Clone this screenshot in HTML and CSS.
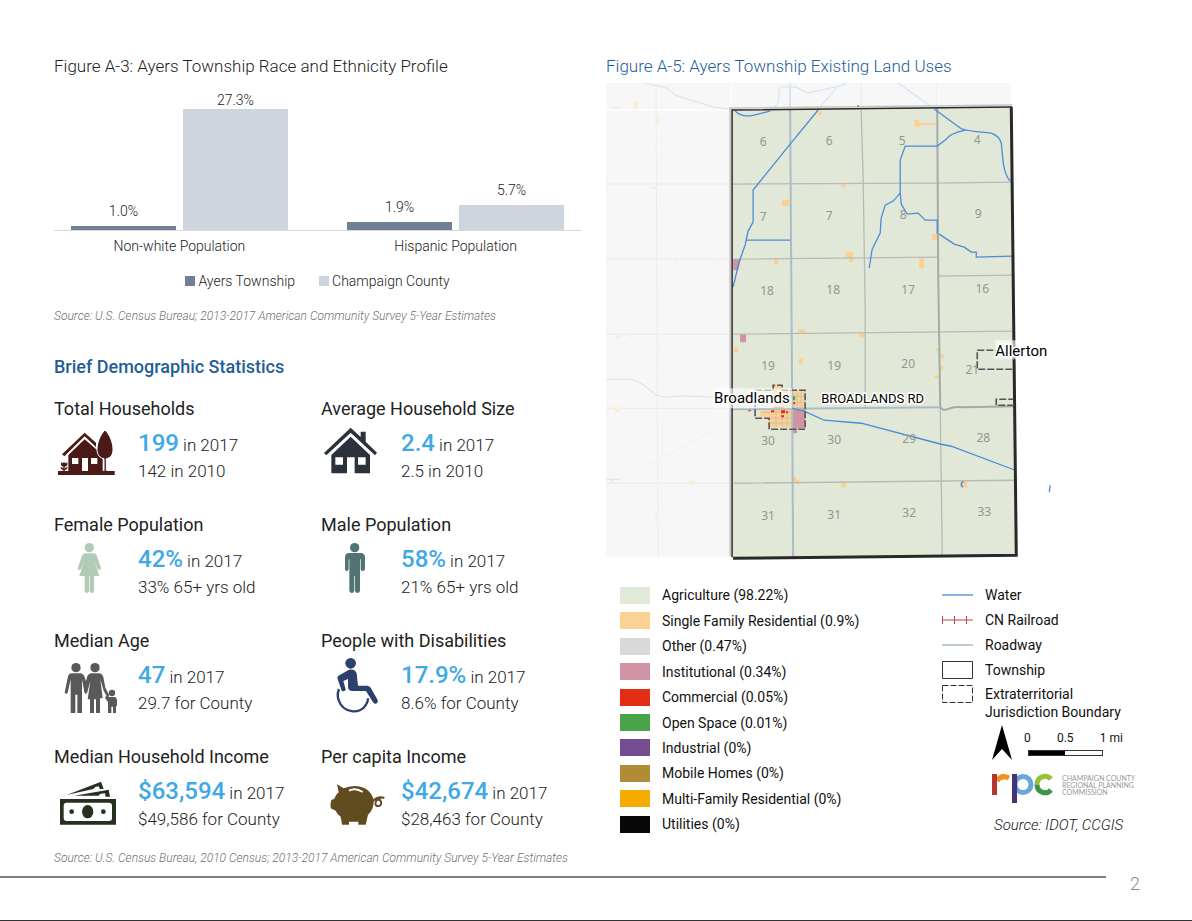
FILE: index.html
```html
<!DOCTYPE html>
<html lang="en">
<head>
<meta charset="utf-8">
<title>Ayers Township Profile</title>
<link rel="stylesheet" href="styles.css">
</head>
<body>
<main class="page">
  <div class="column">
    <section>
      <h2 class="figure-title">Figure A-3: Ayers Township Race and Ethnicity Profile</h2>
      <div class="plot">
        <div class="group">
          <div class="bar-column"><span class="bar-label">1.0%</span><div class="bar township" style="height:2.9%"></div></div>
          <div class="bar-column"><span class="bar-label tight">27.3%</span><div class="bar county" style="height:79.6%"></div></div>
        </div>
        <div class="group">
          <div class="bar-column"><span class="bar-label">1.9%</span><div class="bar township" style="height:5.5%"></div></div>
          <div class="bar-column"><span class="bar-label">5.7%</span><div class="bar county" style="height:16.6%"></div></div>
        </div>
      </div>
      <div class="categories"><span>Non-white Population</span><span>Hispanic Population</span></div>
      <div class="chart-legend">
        <span class="key"><i class="dot township"></i>Ayers Township</span>
        <span class="key"><i class="dot county"></i>Champaign County</span>
      </div>
      <p class="source">Source: U.S. Census Bureau; 2013-2017 American Community Survey 5-Year Estimates</p>
    </section>

    <section>
      <h2 class="section-title">Brief Demographic Statistics</h2>
      <div class="stats">
        <article class="stat">
          <h3>Total Households</h3>
          <div class="stat-body">
            <svg class="icon" viewBox="42 255 198 180" fill="#4a1a18" aria-hidden="true">
              <path d="M54 393H224V405H54Z"/>
              <path d="M66 343 134 278 168 308V321L134 289 73 349Z"/>
              <path d="M85 345 134 298 171 330Q176 350 188 356V394H85Z"/>
              <path d="M96 354H115V372H96ZM126 354H144V393H126ZM153 354H172V372H153Z" fill="#fff"/>
              <path d="M195 270C180 284 171 310 171 328C171 345 181 355 192 356V394H199V356C211 355 219 345 219 328C219 309 210 284 195 270Z" stroke="#fff" stroke-width="3"/>
              <path d="M190 392H202V405H190Z"/>
              <path d="M63 367 68 370 72 366 76 370 82 367V376Q79 380 74 380V386Q77 380 84 382Q81 390 74 391V394H70V391Q63 389 61 382Q68 381 70 386V380Q64 379 63 374Z"/>
            </svg>
            <p><strong>199</strong> in 2017<br>142 in 2010</p>
          </div>
        </article>
        <article class="stat">
          <h3>Average Household Size</h3>
          <div class="stat-body">
            <svg class="icon" viewBox="33 255 198 180" fill="#2b323c" aria-hidden="true">
              <path d="M42 339 122 263 152 291V275H167V305L201 338 195 346 122 278 49 346Z"/>
              <path d="M64 345 122 290 180 345V400H134V352H111V400H64Z"/>
              <path d="M76 352H99V374H76ZM144 352H167V374H144Z" fill="#fff"/>
            </svg>
            <p><strong>2.4</strong> in 2017<br>2.5 in 2010</p>
          </div>
        </article>
        <article class="stat">
          <h3>Female Population</h3>
          <div class="stat-body">
            <svg class="icon" viewBox="42 603 198 180" fill="#b2cbb8" aria-hidden="true">
              <circle cx="148" cy="623" r="14"/>
              <path d="M136 640H160Q168 640 171 648L183 684Q183 690 177 690Q174 689 172 685L163 660 178 708H162V753Q161 759 155 759Q149 758 149 753V708H147V753Q146 759 140 759Q134 758 134 753V708H118L133 660 124 685Q121 691 116 690Q112 687 114 682L126 647Q129 640 136 640Z"/>
            </svg>
            <p><strong>42%</strong> in 2017<br>33% 65+ yrs old</p>
          </div>
        </article>
        <article class="stat">
          <h3>Male Population</h3>
          <div class="stat-body">
            <svg class="icon" viewBox="33 603 198 180" fill="#527373" aria-hidden="true">
              <circle cx="134" cy="623" r="14"/>
              <path d="M116 639H153Q164 640 165 651V687Q164 693 158 693Q152 693 152 687V658H150V752Q149 759 142 759Q136 758 135 752V709H133V752Q132 759 125 759Q119 758 118 752V658H116V687Q115 693 110 693Q105 693 105 687V651Q106 640 116 639Z"/>
            </svg>
            <p><strong>58%</strong> in 2017<br>21% 65+ yrs old</p>
          </div>
        </article>
        <article class="stat">
          <h3>Median Age</h3>
          <div class="stat-body">
            <svg class="icon" viewBox="42 111 198 180" fill="#595959" aria-hidden="true">
              <circle cx="108" cy="143" r="14"/><circle cx="165" cy="143" r="14"/>
              <path d="M95 160H122Q130 161 133 169L138 184 142 169Q145 161 153 160H177Q187 161 190 171L196 203 208 226 203 234 191 212 181 178 188 235H180V279H168V238H162V279H150V238H143L151 183 141 220Q136 224 133 217L126 178V279H112V224H106V279H92V178L83 218Q79 224 74 218L84 169Q87 160 95 160Z"/>
              <circle cx="216" cy="219" r="9.5"/>
              <path d="M198 228 208 231H224Q231 233 231 240V258H228V279H219V260H214V279H204V247L195 233Z"/>
            </svg>
            <p><strong>47</strong> in 2017<br>29.7 for County</p>
          </div>
        </article>
        <article class="stat">
          <h3>People with Disabilities</h3>
          <div class="stat-body">
            <svg class="icon" viewBox="33 111 198 180" fill="#2b406b" aria-hidden="true">
              <circle cx="122" cy="130" r="16"/>
              <path d="M117 149Q136 146 140 160L144 197H172Q179 198 182 203L203 240Q205 248 198 251Q192 252 189 247L168 213H127Q115 213 114 201V177L100 183 107 208Q105 217 95 212L83 177Q80 171 88 166Z"/>
              <path d="M87 207Q80 225 86 240C98 279 151 285 168 254Q174 246 174 235" fill="none" stroke="#2b406b" stroke-width="7"/>
            </svg>
            <p><strong>17.9%</strong> in 2017<br>8.6% for County</p>
          </div>
        </article>
        <article class="stat">
          <h3>Median Household Income</h3>
          <div class="stat-body">
            <svg class="icon" viewBox="42 459 198 180" fill="#263020" aria-hidden="true">
              <path d="M80 525 183 485 191 506 180 508 176 499Q164 500 160 507Z"/>
              <path d="M103 527 206 509 210 530H197L195 520Q180 520 176 527Z"/>
              <path d="M60 537H228V614H60Z"/>
              <rect x="71" y="548" width="145" height="55" rx="9" fill="#fff"/>
              <ellipse cx="143" cy="575" rx="17" ry="20"/><circle cx="95" cy="575" r="7"/><circle cx="190" cy="575" r="7"/>
            </svg>
            <p><strong>$63,594</strong> in 2017<br>$49,586 for County</p>
          </div>
        </article>
        <article class="stat">
          <h3>Per capita Income</h3>
          <div class="stat-body">
            <svg class="icon" viewBox="33 459 198 180" fill="#614c20" aria-hidden="true">
              <path d="M81 493 101 505Q120 498 137 498Q181 501 191 540Q193 567 174 584L167 614H145V605H117V614H96L92 590Q82 584 77 572L62 565Q60 551 64 540L73 536Q76 525 86 517Z"/>
              <path d="M117 512Q137 502 158 516" fill="none" stroke="#fff" stroke-width="6"/>
              <path d="M187 544Q206 526 223 534M213 535C191 540 193 561 206 558C220 555 212 536 204 540" fill="none" stroke="#614c20" stroke-width="6"/>
            </svg>
            <p><strong>$42,674</strong> in 2017<br>$28,463 for County</p>
          </div>
        </article>
      </div>
      <p class="source">Source: U.S. Census Bureau, 2010 Census; 2013-2017 American Community Survey 5-Year Estimates</p>
    </section>
  </div>

  <section class="column">
    <h2 class="figure-title blue">Figure A-5: Ayers Township Existing Land Uses</h2>
    <svg class="map" viewBox="606 83 454 478" role="img" aria-label="Existing land use map of Ayers Township">
      <path d="M606 83H1011V108L733 557H606Z" fill="#f7f7f7"/>
      <g fill="none" stroke="#ebecee">
        <path d="M606 184H731M606 259H731M606 334H733M606 408H733M606 483H733M656 83 658 558M861 83V108M936 83V108"/>
        <path d="M790 83V108" stroke="#dfe4e9" stroke-width="2"/>
        <path d="M606 110H731M731 83V110" stroke="#fff"/>
        <path d="M619 480 733 420" stroke="#f1f2f2"/>
        <path d="M645 83 667 88 675 95 713 107 729 109M773 108 778 103 779 90Q779 86 784 87H796L807 93 840 86 846 83M838 86 819 108M898 83 930 106M606 379H629Q638 380 645 386L655 394Q661 398 675 396 692 395 725 398M606 479H619M611 479 614 483" stroke="#cfe3f5"/>
      </g>
      <path d="M613 107H619V109H613ZM633 102H638V109H633ZM657 118H660V123H657ZM655 147H657V151H655ZM651 186H656V189H651ZM727 165H729V168H727ZM727 278H729V282H727ZM675 260H677V262H675ZM715 260H717V262H715ZM616 335H621V338H616ZM629 335H632V337H629ZM659 346H661V351H659ZM614 407H621V412H614ZM689 480H695V483H689ZM655 515H658V521H655Z" fill="#fcefd9"/>
      <path d="M732 109 1012 107 1017 555 733 557Z" fill="#e1e8d8"/>
      <g class="residential">
        <path d="M818 111H822V115H818ZM914 120H919V123H936V125H919V127H914ZM782 200H789V206H782ZM841 184H845V187H841ZM774 259H778V264H774ZM846 252H853V258H853V262H849V258H846ZM919 258H924V268H919ZM932 234H937V240H932ZM798 329H805V333H798ZM734 347H738V352H734ZM799 358H803V364H799ZM859 333H865V337H859ZM936 348H939V351H936ZM940 354H944V358H940ZM940 366H943V370H940ZM934 375H939V378H934ZM792 476H796V479H799V483H792ZM841 482H846V487H841ZM960 481H967V487H960Z"/>
        <path d="M773 385H782V391H805V409H792V427H769V417H760V410H773Z"/>
      </g>
      <path d="M733 259H741L738 270H733ZM740 334H746V342H740ZM792 409H805V428H797V433H792Z" fill="#d094a4"/>
      <path d="M776 391V427M782 405V427M787 405V427M762 412H792M770 418H792M770 423H792M797 391V409M801 391V409M793 396H805M793 402H805" stroke="#c6bfae" stroke-width=".8"/>
      <path d="M792 396H795V400H792Z" fill="#4b9f35"/>
      <path d="M774 407H784V409H774ZM781 410H785V413H781ZM786 411H788V413H786ZM771 410H774V412H771ZM781 415H784V417H781ZM793 402H795V404H793ZM749 408 752 409 750 411H748Z" fill="#e32a17"/>
      <g fill="none" stroke="#b9bab8" stroke-width="1.3">
        <path d="M732 184 937 183 1012 182M732 259 937 257M938 276 1013 275M733 334 1014 331M734 483 1015 480M861 110 863 180 865 310V407M940 407 942 555"/>
        <path d="M937 108 938 276 940 406Q942 412 950 408 955 406 965 407L1014 406" stroke="#a3aaa7" stroke-width="2"/>
        <path d="M790 110 792 400 793 557M733 409 940 407" stroke="#a9bccb" stroke-width="2"/>
      </g>
      <g class="water">
        <path d="M735 111Q742 118 754 115L770 111M818 110 790 144 753 190V222L748 231 745 245 739 262 733 287M746 240H790"/>
        <path d="M934 109 960 128Q964 131 991 133 999 136 1001 143L1003 163Q1005 176 1010 181M965 130Q950 133 945 140L937 146H905L900 160V193L893 201 885 205 881 218 880 233 872 249 869 268M900 193 901 204 907 214 918 213 925 220H937V234"/>
        <path d="M939 234 954 244 964 247 971 252H976V257L1012 256M792 408 804 411 824 420 861 423 941 444 951 446 1015 470M1050 485 1049 492M963 481Q959 485 963 487"/>
      </g>
      <path d="M730 556V108L1012 105" fill="none" stroke="#c4c4c4" stroke-width="1.5"/>
      <path d="M732 557V110L1012 107" fill="none" stroke="#292929" stroke-width="1.5"/>
      <path d="M1011 107 1016 555 733 558" fill="none" stroke="#292929" stroke-width="3"/>
      <circle cx="858" cy="106" r="1" fill="#888"/>
      <path class="boundary" d="M755 390H773V385H782V390H805V429H769V418H755ZM1012 369H977V350H1012M1014 405H996V399H1013"/>
      <g class="section-number">
        <text x="763" y="146">6</text><text x="829" y="145">6</text><text x="902" y="145">5</text><text x="977" y="144">4</text>
        <text x="763" y="221">7</text><text x="829" y="220">7</text><text x="903" y="219">8</text><text x="978" y="218">9</text>
        <text x="767" y="295">18</text><text x="833" y="294">18</text><text x="908" y="294">17</text><text x="982" y="293">16</text>
        <text x="768" y="370">19</text><text x="834" y="370">19</text><text x="908" y="368">20</text><text x="972" y="374">21</text>
        <text x="768" y="445">30</text><text x="834" y="444">30</text><text x="909" y="443">29</text><text x="983" y="442">28</text>
        <text x="768" y="520">31</text><text x="834" y="519">31</text><text x="909" y="517">32</text><text x="984" y="516">33</text>
      </g>
      <path d="M713 388H792V408H713ZM995 340H1048V359H995Z" fill="#fff" opacity=".6"/>
      <g class="place">
        <text x="714" y="403">Broadlands</text>
        <text x="995" y="356">Allerton</text>
        <text class="road" x="821" y="403">BROADLANDS RD</text>
      </g>
    </svg>

    <div class="map-legend">
      <ul class="land-uses">
        <li><i class="swatch agriculture"></i>Agriculture (98.22%)</li>
        <li><i class="swatch single-family"></i>Single Family Residential (0.9%)</li>
        <li><i class="swatch other"></i>Other (0.47%)</li>
        <li><i class="swatch institutional"></i>Institutional (0.34%)</li>
        <li><i class="swatch commercial"></i>Commercial (0.05%)</li>
        <li><i class="swatch open-space"></i>Open Space (0.01%)</li>
        <li><i class="swatch industrial"></i>Industrial (0%)</li>
        <li><i class="swatch mobile"></i>Mobile Homes (0%)</li>
        <li><i class="swatch multi-family"></i>Multi-Family Residential (0%)</li>
        <li><i class="swatch utilities"></i>Utilities (0%)</li>
      </ul>
      <div class="map-notes">
        <ul class="symbols">
          <li><svg class="symbol" viewBox="0 0 31 18"><path d="M0 9H31" stroke="#4c8ad8" stroke-width="1.3"/></svg>Water</li>
          <li><svg class="symbol" viewBox="0 0 31 18"><path d="M0 9H31M.5 5V13M12.500 5V13M24.500 5V13" stroke="#c0453e"/></svg>CN Railroad</li>
          <li><svg class="symbol" viewBox="0 0 31 18"><path d="M0 9H31" stroke="#a6b8c8" stroke-width="1.500"/></svg>Roadway</li>
          <li><svg class="symbol" viewBox="0 0 31 18"><path d="M.5 .5H30.500V17.500H.5Z" fill="#fff" stroke="#333"/></svg>Township</li>
          <li class="two-line"><svg class="symbol" viewBox="0 0 31 18"><path d="M.5 .5H30.500V17.500H.5Z" fill="#fff" stroke="#333" stroke-dasharray="6 2"/></svg><span>Extraterritorial<br>Jurisdiction Boundary</span></li>
        </ul>
        <div class="scale-row">
          <svg class="north" viewBox="0 0 20 35" aria-label="North"><path d="M10 0 20 35 10 24 0 35Z"/></svg>
          <div class="scale">
            <div class="scale-labels"><span>0</span><span>0.5</span><span>1 mi</span></div>
            <div class="scale-bar"></div>
          </div>
        </div>
        <div class="brand">
          <svg class="logo" viewBox="0 0 62 30" fill="none" stroke-width="5" role="img" aria-label="rpc">
            <path d="M5 8Q9 1 17 5" stroke="#f0921e"/>
            <path d="M2.500 1V22" stroke="#b3372f"/>
            <circle cx="31" cy="11.500" r="8" stroke="#6aa7d8"/>
            <path d="M22.500 1V30" stroke="#43347a"/>
            <path d="M45 11.500A8 8 0 0 1 59 6" stroke="#97c23c"/>
            <path d="M45 11.500A8 8 0 0 0 59 17" stroke="#3f9448"/>
          </svg>
          <p>CHAMPAIGN COUNTY<br>REGIONAL PLANNING<br>COMMISSION</p>
        </div>
        <p class="map-source">Source: IDOT, CCGIS</p>
      </div>
    </div>
  </section>
</main>
<footer class="page-footer"><hr><span>2</span></footer>
</body>
</html>
```

FILE: styles.css
```css
* { box-sizing: border-box; }
body {
  margin: 0;
  min-height: 100vh;
  display: flex;
  flex-direction: column;
  background: #fff;
  color: #222;
  font-family: Roboto, "Liberation Sans", sans-serif;
  font-weight: 300;
  border-bottom: 1px solid #333;
}
h2, h3, p, ul { margin: 0; padding: 0; }
ul { list-style: none; }
.page {
  display: grid;
  grid-template-columns: 527fr 532fr;
  column-gap: 25px;
  padding: 54px 54px 0;
}
.figure-title { font-size: 17px; line-height: 24px; font-weight: 300; }
.blue { color: #1f5e98; }

.plot {
  display: flex;
  justify-content: space-between;
  height: 153px;
  padding: 0 17px;
  border-bottom: 1px solid #d9d9d9;
}
.group { display: flex; gap: 7px; width: 44%; }
.bar-column {
  flex: 1;
  display: flex;
  flex-direction: column;
  justify-content: flex-end;
  text-align: center;
}
.bar-label { font-size: 14px; line-height: 18px; margin-bottom: 6px; }
.bar-label.tight { margin-bottom: 0; }
.township { background: #6e7f97; }
.county { background: #ced5df; }
.categories {
  display: flex;
  justify-content: space-between;
  padding: 5px 17px 0;
  font-size: 14px;
  line-height: 20px;
}
.categories span { width: 44%; text-align: center; }
.chart-legend {
  display: flex;
  justify-content: center;
  gap: 24px;
  margin-top: 15px;
  font-size: 14px;
  line-height: 20px;
}
.key { display: flex; align-items: center; gap: 3px; }
.dot { width: 10px; height: 10px; }
.source {
  margin-top: 17px;
  color: #707070;
  font-size: 12px;
  line-height: 16px;
  font-style: italic;
}

.section-title {
  margin: 31px 0 18px;
  color: #1f5e98;
  font-size: 18px;
  line-height: 24px;
  font-weight: 500;
}
.stats { display: grid; grid-template-columns: 267fr 260fr; row-gap: 28px; }
.stat h3 { font-size: 18px; line-height: 24px; font-weight: 400; }
.stat-body { display: grid; grid-template-columns: 84px 1fr; padding-top: 4px; }
.stat:nth-child(even) .stat-body { grid-template-columns: 80px 1fr; }
.icon { width: 66px; height: 60px; }
.stat-body p { padding-top: 7px; font-size: 17px; line-height: 26px; }
.stat-body strong { color: #3fa9e5; font-size: 24px; font-weight: 500; line-height: 1px; }

.map { display: block; width: 85.4%; margin-top: 5px; }
.residential { fill: #fbd092; }
.water { fill: none; stroke: #4c8ad8; stroke-width: 1.3; }
.boundary { fill: none; stroke: #555; stroke-width: 1.6; stroke-dasharray: 7 2; }
.section-number { fill: #929690; font: 12px "Noto Sans", sans-serif; text-anchor: middle; }
.place { fill: #000; font-size: 15px; font-weight: 400; stroke: #fff; stroke-width: 3px; paint-order: stroke; }
.road { font-size: 13px; }

.map-legend {
  display: grid;
  grid-template-columns: 322fr 196fr;
  margin-top: 24px;
  padding-left: 14px;
  color: #111;
  font-size: 14px;
  font-weight: 400;
}
.land-uses { display: flex; flex-direction: column; justify-content: space-between; }
.land-uses li { display: flex; align-items: center; gap: 12px; line-height: 20px; }
.swatch { width: 30px; height: 17px; }
.agriculture { background: #e1ead8; }
.single-family { background: #fbd194; }
.other { background: #d9d9d9; }
.institutional { background: #d094a5; }
.commercial { background: #e32d14; }
.open-space { background: #4aa24b; }
.industrial { background: #744c90; }
.mobile { background: #b18c37; }
.multi-family { background: #f5ab00; }
.utilities { background: #080808; }

.symbols { display: flex; flex-direction: column; gap: 5px; }
.symbols li { display: flex; align-items: center; gap: 12px; line-height: 20px; white-space: nowrap; }
.symbols .two-line { align-items: flex-start; line-height: 18px; }
.symbol { width: 31px; height: 18px; fill: none; flex: none; }
.scale-row { display: flex; gap: 12px; margin: 4px 0 0 50px; }
.north { width: 20px; height: 35px; }
.scale { padding-top: 4px; font-size: 12px; line-height: 18px; }
.scale-labels { display: flex; justify-content: space-between; width: 99px; }
.scale-bar {
  width: 75px;
  height: 6px;
  margin: 3px 0 0 4px;
  border: 1px solid #333;
  background: linear-gradient(90deg, #000 50%, #fff 50%);
}
.brand { display: flex; gap: 8px; margin: 13px 0 0 50px; }
.logo { width: 62px; height: 30px; flex: none; }
.brand p { padding-top: 2px; color: #999; font: 7px/7px Lato, sans-serif; white-space: nowrap; }
.map-source { margin: 13px 0 0 52px; font-size: 15px; line-height: 18px; font-style: italic; font-weight: 300; white-space: nowrap; }

.page-footer {
  display: flex;
  margin-top: auto;
  padding: 0 52px 25px 0;
  color: #888;
  font-size: 18px;
  line-height: 22px;
}
.page-footer hr { flex: 1; height: 2px; margin: 3px 24px 0 0; border: 0; background: #808080; }
```
